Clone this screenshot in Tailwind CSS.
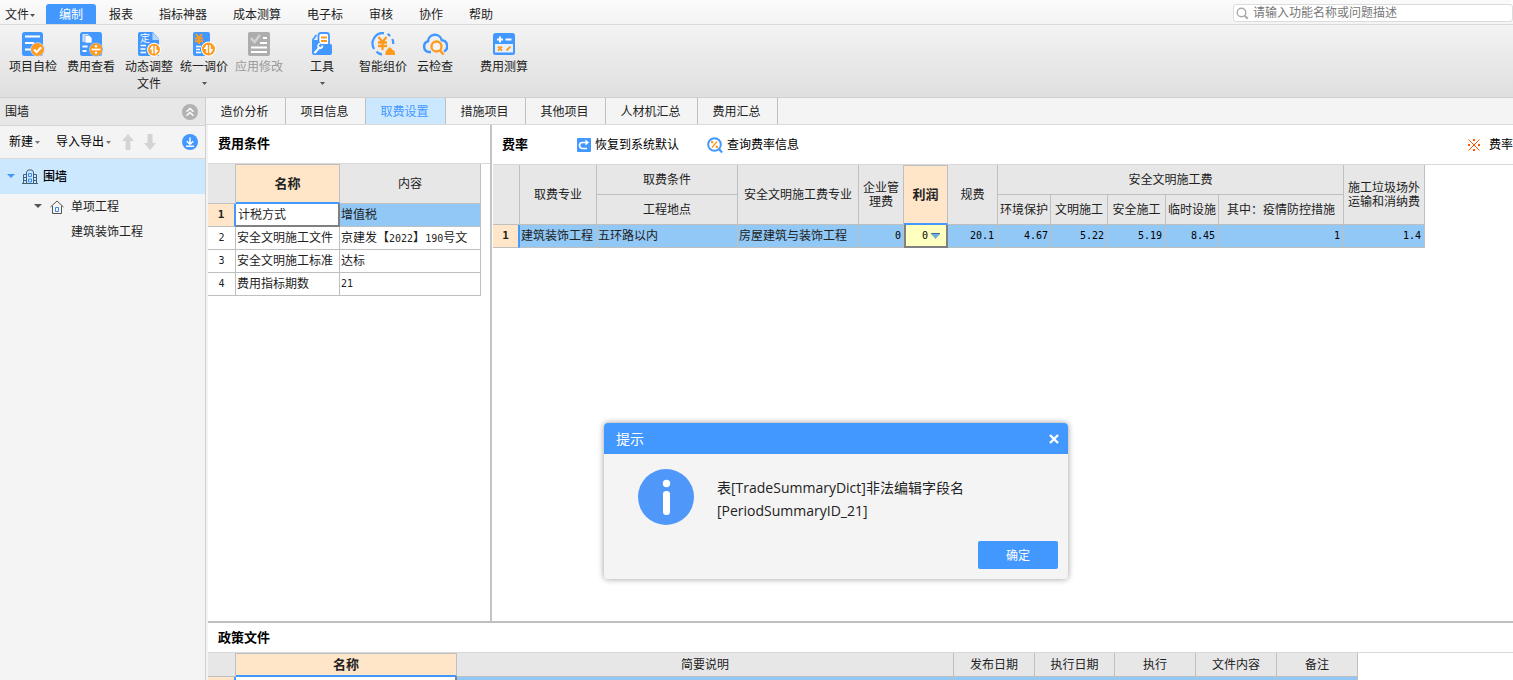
<!DOCTYPE html>
<html lang="zh-CN">
<head>
<meta charset="utf-8">
<title>取费设置</title>
<script src="https://cdn.jsdelivr.net/npm/@tailwindcss/browser@4"></script>
</head>
<body class="h-screen overflow-hidden flex flex-col bg-[#f4f4f4] font-['Liberation_Sans','Noto_Sans_CJK_SC',sans-serif] text-xs text-[#222] whitespace-nowrap">

<!-- menu bar -->
<header class="shrink-0 h-[25px] flex items-end border-b border-[#d9d9d9] bg-linear-to-b from-[#fbfbfb] to-[#f4f4f4]">
  <nav class="flex items-end leading-[18px]">
    <button class="w-[46px] pl-[5px] pt-0.5 flex items-center">文件<svg class="ml-px" width="5" height="3" viewBox="0 0 5 3"><path d="M0 0h5L2.500 3z" fill="#555"/></svg></button>
    <button class="px-[13px] pt-0.5 bg-[#4398ff] text-white rounded-t-[3px]">编制</button>
    <button class="px-[13px] pt-0.5">报表</button>
    <button class="px-[13px] pt-0.5">指标神器</button>
    <button class="px-[13px] pt-0.5">成本测算</button>
    <button class="px-[13px] pt-0.5">电子标</button>
    <button class="px-[13px] pt-0.5">审核</button>
    <button class="px-[13px] pt-0.5">协作</button>
    <button class="px-[13px] pt-0.5">帮助</button>
  </nav>
  <label class="ml-auto mb-0.5 w-[280px] h-[18px] flex items-center gap-1 pl-0.5 bg-white border border-[#dcdcdc] rounded-[3px]">
    <svg width="13" height="13" viewBox="0 0 13 13" fill="none" stroke="#aaa" stroke-width="1.4"><circle cx="5.500" cy="5.500" r="4.300"/><path d="M8.800 8.800l3 3" stroke-width="2"/></svg>
    <input class="flex-1 min-w-0 outline-none placeholder:text-[#777]" type="text" aria-label="搜索" placeholder="请输入功能名称或问题描述">
  </label>
</header>

<!-- ribbon -->
<div class="shrink-0 h-[73px] flex items-start pl-[9px] pt-1.5 border-b border-[#cfcfcf] bg-linear-to-b from-[#f3f3f3] to-[#dfdfdf] leading-[17px]">
  <button class="w-12 mr-2.5 flex flex-col items-center gap-0.5">
    <svg width="24" height="26" viewBox="0 0 24 26"><rect x="1" y="1" width="21" height="24" rx="2.5" fill="#4398ff"/><path d="M4 5.500h15M4 12h9M4 18.500h6" stroke="#fff" stroke-width="1.800"/><circle cx="16.500" cy="18.500" r="7.200" fill="#b9d9ff"/><circle cx="16.500" cy="18.500" r="6.500" fill="#ff9a1c"/><path d="M13 18.500l2.600 2.700 4.600-5" fill="none" stroke="#fff" stroke-width="2"/></svg>
    <span>项目自检</span></button>
  <button class="w-12 mr-2.5 flex flex-col items-center gap-0.5">
    <svg width="24" height="26" viewBox="0 0 24 26"><rect x="1" y="1" width="22" height="24" rx="2.500" fill="#4398ff"/><path d="M3.500 3h6v8h-6z" fill="#cfe5ff"/><path d="M6 4.500h4.500l2.500 2.500v5h-7z" fill="#fff" stroke="#4398ff" stroke-width=".6"/><path d="M3.500 15.500h5M3.500 20h4" stroke="#fff" stroke-width="1.800"/><circle cx="17" cy="18.500" r="7" fill="#8fc1ff"/><circle cx="17" cy="18.500" r="6.300" fill="#ff9a1c"/><path d="M12.500 18.500h9" stroke="#fff" stroke-width="1.700"/><circle cx="17" cy="15.200" r="1.200" fill="#fff"/><circle cx="17" cy="21.800" r="1.200" fill="#fff"/></svg>
    <span>费用查看</span></button>
  <button class="w-12 mr-[7px] flex flex-col items-center gap-0.5">
    <svg width="24" height="26" viewBox="0 0 24 26"><path d="M3 1h13l6 7v17H3a2 2 0 01-2-2V3a2 2 0 012-2z" fill="#4398ff"/><path d="M15.500 1l7 8h-7z" fill="#b5d6ff"/><text x="3" y="10.500" font-size="10" fill="#fff">定</text><path d="M3.500 14.500h5.500M3.500 18h5M3.500 21.500h5.500" stroke="#fff" stroke-width="1.300"/><circle cx="17" cy="18.800" r="7" fill="#fff"/><circle cx="17" cy="18.800" r="6" fill="#ff9a1c"/><path d="M15.500 15v7.500M18.500 22.500V15" stroke="#fff" stroke-width="1.600"/><path d="M15.500 14v4.500h-3zM18.500 23.500V19h3z" fill="#fff"/></svg>
    <span>动态调整<br>文件</span></button>
  <button class="w-12 mr-[7px] flex flex-col items-center gap-0.5">
    <svg width="24" height="26" viewBox="0 0 24 26"><rect x="1" y="1" width="17" height="24" rx="2" fill="#4398ff"/><path d="M4 3l3 4 3-4M3 7.500h8M3 10.300h8M7 7v6" fill="none" stroke="#ff9a1c" stroke-width="2"/><path d="M4 15.500h5M4 18.500h4M4 21.500h5" stroke="#fff" stroke-width="1.300"/><circle cx="16.500" cy="18" r="7.500" fill="#fff"/><circle cx="16.500" cy="18" r="6.500" fill="#ff9a1c"/><path d="M15 14v8M18 22v-8" stroke="#fff" stroke-width="1.600"/><path d="M15 13v5h-3.300zM18 23v-5h3.300z" fill="#fff"/></svg>
    <span>统一调价</span>
    <svg class="mt-1" width="5" height="3" viewBox="0 0 5 3"><path d="M0 0h5L2.500 3z" fill="#555"/></svg></button>
  <button class="w-12 mr-[27px] flex flex-col items-center gap-0.5 text-[#9a9a9a]" disabled>
    <svg width="24" height="26" viewBox="0 0 24 26"><rect x="1" y="1" width="22" height="24" rx="2" fill="#adadad"/><path d="M4 7l3.500 4L13 4" fill="none" stroke="#d2d2d2" stroke-width="2.400"/><path d="M16 7h4M13 12h7M4 16.500h16M4 21h16" stroke="#fff" stroke-width="1.800"/></svg>
    <span>应用修改</span></button>
  <button class="w-6 mr-[25px] flex flex-col items-center gap-0.5">
    <svg width="24" height="26" viewBox="0 0 24 26"><path d="M8.500 12V4a2.500 2.500 0 012.500-2h5.500A2.500 2.500 0 0119 4.500V13" fill="#fff" stroke="#4398ff" stroke-width="1.800"/><path d="M3 11V8.500L6.500 4" fill="none" stroke="#4398ff" stroke-width="1.800"/><path d="M11 6.500h6M11 10h6" stroke="#ff9a1c" stroke-width="1.900"/><path d="M2 9h5.500l1.500 1.500L11 13h9.500a1.500 1.500 0 011.500 1.500V22a2 2 0 01-2 2H4a2 2 0 01-2-2z" fill="#4398ff"/><path d="M5 21.500l4.500-5" stroke="#fff" stroke-width="2" stroke-linecap="round"/><path d="M10.500 12.500a2.500 2.500 0 00-1.500 4.500 2.500 2.500 0 003.500-2.500" fill="none" stroke="#fff" stroke-width="1.600"/></svg>
    <span>工具</span>
    <svg class="mt-1" width="5" height="3" viewBox="0 0 5 3"><path d="M0 0h5L2.500 3z" fill="#555"/></svg></button>
  <button class="w-12 mr-2.5 flex flex-col items-center gap-0.5">
    <svg width="26" height="26" viewBox="0 0 26 26"><path d="M4.200 18A10.300 10.300 0 0114 2.200M17.500 3.100a10.500 10.500 0 012.700 1.900M22.300 8a10 10 0 01.900 5M6.500 20.600c1.500 1.500 3.500 2.500 5.500 2.700" fill="none" stroke="#4398ff" stroke-width="2.200"/><path d="M8.500 6l4 5 4-5M8 11.500h9M8 15h9M12.500 11v8" fill="none" stroke="#ff9a1c" stroke-width="2.300"/><path d="M15.500 24v-2.500c0-2 2-2.500 2.500-4 .5-1.500 3-1.500 3.500 0 .5 1.500 3.500 2 3.500 4V24z" fill="#ff9a1c"/></svg>
    <span>智能组价</span></button>
  <button class="w-9 mr-[27px] flex flex-col items-center gap-0.5">
    <svg width="26" height="26" viewBox="0 0 26 26"><path d="M9 21H7A5.500 5.500 0 016 10.300 7 7 0 0119.800 9.200 6 6 0 0122 20.500" fill="none" stroke="#4398ff" stroke-width="2.500"/><circle cx="14.500" cy="15.500" r="5" fill="#f4f4f4" stroke="#ff9a1c" stroke-width="2.300"/><path d="M18 19.500l3.500 4" stroke="#ff9a1c" stroke-width="2.500"/></svg>
    <span>云检查</span></button>
  <button class="w-12 flex flex-col items-center gap-0.5">
    <svg width="24" height="26" viewBox="0 0 24 26"><rect x="1" y="2" width="22" height="22" rx="2.500" fill="#4398ff"/><path d="M3 13h18v8.500H3z" fill="#e6f1ff"/><path d="M8 5.500v6M5 8.500h6M13.500 8.500h6" stroke="#fff" stroke-width="1.900"/><path d="M6 15.500l4 4M10 15.500l-4 4M14.500 19.500l4-4" stroke="#ff9a1c" stroke-width="1.900"/></svg>
    <span>费用测算</span></button>
</div>

<div class="flex-1 min-h-0 flex">
  <!-- project tree -->
  <aside class="shrink-0 w-[206px] border-r border-[#cfcfcf] flex flex-col">
    <div class="h-7 flex items-center justify-between pl-[5px] pr-[7px] bg-[#e7e7e7] border-b border-[#d4d4d4]">
      <span>围墙</span>
      <button aria-label="折叠"><svg width="16" height="16" viewBox="0 0 16 16"><circle cx="8" cy="8" r="8" fill="#b2b2b2"/><path d="M4.500 7.700L8 4.500l3.500 3.200M4.500 11.700L8 8.500l3.500 3.200" fill="none" stroke="#fff" stroke-width="1.500"/></svg></button>
    </div>
    <div class="h-[33px] flex items-center pl-[9px] pr-[7px] border-b border-[#d9d9d9] text-black">
      <button class="flex items-center gap-0.5 mr-4">新建<svg width="5" height="3" viewBox="0 0 5 3"><path d="M0 0h5L2.500 3z" fill="#777"/></svg></button>
      <button class="flex items-center gap-0.5 mr-[11px]">导入导出<svg width="5" height="3" viewBox="0 0 5 3"><path d="M0 0h5L2.500 3z" fill="#777"/></svg></button>
      <button class="mr-2.5" aria-label="上移" disabled><svg width="12" height="16" viewBox="0 0 12 16"><path d="M6 0l6 7H8.500v9h-5V7H0z" fill="#d4d4d4"/></svg></button>
      <button aria-label="下移" disabled><svg width="12" height="16" viewBox="0 0 12 16"><path d="M6 16l6-7H8.500V0h-5v9H0z" fill="#d4d4d4"/></svg></button>
      <button class="ml-auto" aria-label="下载"><svg width="16" height="16" viewBox="0 0 16 16"><circle cx="8" cy="8" r="8" fill="#4398ff"/><path d="M8 3.500v6.500M4.800 7.200L8 10.200l3.200-3M4 12.300h8" fill="none" stroke="#fff" stroke-width="1.500"/></svg></button>
    </div>
    <ul>
      <li class="h-[35px] flex items-center pl-[7px] bg-[#cce8ff] font-medium text-black">
        <svg width="8" height="5" viewBox="0 0 8 5"><path d="M0 0h8L4 4z" fill="#4398ff"/></svg>
        <svg class="ml-[7px] mr-[5px]" width="16" height="16" viewBox="0 0 16 16" fill="none" stroke="#42607c"><path d="M0 14.500h16M1.500 14V5.500H4M4.500 14V3l1.500-2h4l1.500 2v11M12 5.500h2.500V14M2 8.500h2M2 11.500h2M12 8.500h2M12 11.500h2"/><path d="M6.500 4.500h3v3h-3zM6.500 10h3v3h-3z" stroke="#3b8bea"/></svg>
        围墙</li>
      <li class="h-[25px] flex items-center pl-[34px]">
        <svg width="8" height="5" viewBox="0 0 8 5"><path d="M0 0h8L4 4z" fill="#555"/></svg>
        <svg class="ml-2 mr-[7px]" width="14" height="14" viewBox="0 0 14 14" fill="none" stroke="#555"><path d="M.5 7L7 1l6.500 6M2.500 6v7.500h9V6"/><path d="M5.500 7.500h3v4h-3z" stroke="#3b8bea"/></svg>
        单项工程</li>
      <li class="h-[25px] flex items-center pl-[71px]">建筑装饰工程</li>
    </ul>
  </aside>

  <main class="flex-1 min-w-0 flex flex-col">
    <nav class="shrink-0 h-[27px] flex border-b border-[#d9d9d9]">
      <button class="w-20 pt-0.5 pr-0.5 border-r border-[#bfbfbf]">造价分析</button>
      <button class="w-20 pt-0.5 pr-0.5 border-r border-[#bfbfbf]">项目信息</button>
      <button class="w-20 pt-0.5 pr-0.5 border-r border-[#bfbfbf] bg-[#cce8ff] text-[#4398ff]">取费设置</button>
      <button class="w-20 pt-0.5 pr-0.5 border-r border-[#bfbfbf]">措施项目</button>
      <button class="w-20 pt-0.5 pr-0.5 border-r border-[#bfbfbf]">其他项目</button>
      <button class="w-[92px] pt-0.5 pr-0.5 border-r border-[#bfbfbf]">人材机汇总</button>
      <button class="w-20 pt-0.5 pr-0.5 border-r border-[#bfbfbf]">费用汇总</button>
    </nav>

    <div class="flex-1 min-h-0 ml-0.5 flex flex-col bg-white">
      <div class="flex-1 min-h-0 flex border-b-2 border-[#bfbfbf]">
        <!-- fee conditions -->
        <section class="shrink-0 w-[284px] border-r-2 border-[#c4c4c4]">
          <h2 class="h-[39px] flex items-center pl-2.5 border-b border-[#d9d9d9] text-[13px] font-bold text-black">费用条件</h2>
          <table class="table-fixed w-[273px] border-separate border-spacing-0">
            <colgroup><col class="w-7"><col class="w-[104px]"><col class="w-[141px]"></colgroup>
            <thead><tr class="h-10 bg-[#e7e7e7]">
              <td class="border-r border-b border-[#bfbfbf]"></td>
              <th class="border-r border-t border-[#bfbfbf] border-b-2 border-b-[#4398ff] bg-[#ffe6c8] text-[13px] font-bold">名称</th>
              <th class="border-r border-b border-[#bfbfbf] font-normal">内容</th>
            </tr></thead>
            <tbody>
              <tr class="h-[23px]">
                <td class="border-b border-[#bfbfbf] border-r-2 border-r-[#4398ff] bg-[#ffe6c8] text-center font-bold text-[11px] font-['DejaVu_Sans_Mono',monospace]">1</td>
                <td class="border-r-2 border-b-2 border-[#808080] pl-0.5">计税方式</td>
                <td class="border-r border-b border-[#bfbfbf] pl-px bg-[#91c8f6]">增值税</td>
              </tr>
              <tr class="h-[23px]">
                <td class="border-r border-b border-[#bfbfbf] text-center text-[10px] font-['DejaVu_Sans_Mono',monospace]">2</td>
                <td class="border-r border-b border-[#bfbfbf] pl-px">安全文明施工文件</td>
                <td class="border-r border-b border-[#bfbfbf] pl-px">京建发【<span class="text-[10px] font-['DejaVu_Sans_Mono',monospace]">2022</span>】<span class="text-[10px] font-['DejaVu_Sans_Mono',monospace]">190</span>号文</td>
              </tr>
              <tr class="h-[23px]">
                <td class="border-r border-b border-[#bfbfbf] text-center text-[10px] font-['DejaVu_Sans_Mono',monospace]">3</td>
                <td class="border-r border-b border-[#bfbfbf] pl-px">安全文明施工标准</td>
                <td class="border-r border-b border-[#bfbfbf] pl-px">达标</td>
              </tr>
              <tr class="h-[23px]">
                <td class="border-r border-b border-[#bfbfbf] text-center text-[10px] font-['DejaVu_Sans_Mono',monospace]">4</td>
                <td class="border-r border-b border-[#bfbfbf] pl-px">费用指标期数</td>
                <td class="border-r border-b border-[#bfbfbf] pl-px text-[10px] font-['DejaVu_Sans_Mono',monospace]">21</td>
              </tr>
            </tbody>
          </table>
        </section>

        <!-- fee rates -->
        <section class="flex-1 min-w-0 pl-px">
          <div class="h-10 flex items-center pl-[9px] border-b border-[#d9d9d9] text-black">
            <h2 class="w-[75px] text-[13px] font-bold">费率</h2>
            <button class="w-[130px] flex items-center gap-1">
              <svg width="14" height="14" viewBox="0 0 14 14"><rect width="14" height="14" rx="1" fill="#4398ff"/><path d="M10 10.500H5.500a2.800 2.800 0 010-6H10" fill="none" stroke="#fff" stroke-width="1.700"/><path d="M8.500 1.500l3.500 3-3.500 3z" fill="#fff"/></svg>恢复到系统默认</button>
            <button class="flex items-center gap-1">
              <svg width="16" height="16" viewBox="0 0 16 16"><circle cx="7.500" cy="7.500" r="6.300" fill="#fff" stroke="#4398ff" stroke-width="2"/><path d="M12 12l3 3.500" stroke="#4398ff" stroke-width="2.200"/><path d="M5 10.500l5-6" stroke="#ff9a1c" stroke-width="1.400"/><path d="M4 4h2.200v2.200H4zM8.800 8.800H11V11H8.800z" fill="#ff9a1c"/></svg>查询费率信息</button>
            <svg class="ml-auto mr-[9px]" width="12" height="12" viewBox="0 0 12 12"><path d="M.5.500l11 11M11.500.500l-11 11" stroke="#ff5a00"/><path d="M5 0h2v2H5zM5 10h2v2H5zM0 5h2v2H0zM10 5h2v2h-2z" fill="#ff5a00"/></svg>
            <span>费率</span>
          </div>
          <table class="table-fixed w-[932px] border-separate border-spacing-0 leading-[14px]">
            <colgroup><col class="w-[27px]"><col class="w-[77px]"><col class="w-[141px]"><col class="w-[121px]"><col class="w-[45px]"><col class="w-[44px]"><col class="w-[50px]"><col class="w-[53px]"><col class="w-[57px]"><col class="w-[58px]"><col class="w-[53px]"><col class="w-[125px]"><col class="w-[81px]"></colgroup>
            <thead class="bg-[#e7e7e7]">
              <tr class="h-[30px]">
                <td rowspan="2" class="border-r border-b border-[#bfbfbf]"></td>
                <th rowspan="2" class="border-r border-b border-[#bfbfbf] font-normal">取费专业</th>
                <th class="border-r border-b border-[#bfbfbf] font-normal">取费条件</th>
                <th rowspan="2" class="border-r border-b border-[#bfbfbf] font-normal">安全文明施工费专业</th>
                <th rowspan="2" class="border-r border-b border-[#bfbfbf] font-normal">企业管<br>理费</th>
                <th rowspan="2" class="border-r border-t border-[#bfbfbf] border-b-2 border-b-[#4398ff] bg-[#ffe6c8] text-[13px] font-bold">利润</th>
                <th rowspan="2" class="border-r border-b border-[#bfbfbf] font-normal">规费</th>
                <th colspan="5" class="border-r border-b border-[#bfbfbf] font-normal">安全文明施工费</th>
                <th rowspan="2" class="border-r border-b border-[#bfbfbf] font-normal">施工垃圾场外<br>运输和消纳费</th>
              </tr>
              <tr class="h-[30px]">
                <th class="border-r border-b border-[#bfbfbf] font-normal">工程地点</th>
                <th class="border-r border-b border-[#bfbfbf] font-normal">环境保护</th>
                <th class="border-r border-b border-[#bfbfbf] font-normal">文明施工</th>
                <th class="border-r border-b border-[#bfbfbf] font-normal">安全施工</th>
                <th class="border-r border-b border-[#bfbfbf] font-normal">临时设施</th>
                <th class="border-r border-b border-[#bfbfbf] font-normal">其中：疫情防控措施</th>
              </tr>
            </thead>
            <tbody>
              <tr class="h-[23px] bg-[#91c8f6]">
                <td class="border-b border-[#bfbfbf] border-r-2 border-r-[#4398ff] bg-[#ffe6c8] text-center font-bold text-[11px] font-['DejaVu_Sans_Mono',monospace]">1</td>
                <td class="border-r border-b border-[#bfbfbf] pl-px">建筑装饰工程</td>
                <td class="border-r border-b border-[#bfbfbf] pl-px">五环路以内</td>
                <td class="border-r border-b border-[#bfbfbf] pl-px">房屋建筑与装饰工程</td>
                <td class="border-r border-b border-[#bfbfbf] pr-0.5 text-right text-[10px] text-black font-['DejaVu_Sans_Mono',monospace]">0</td>
                <td class="border-l-2 border-r-2 border-b-2 border-[#808080] bg-[#ffffc0] text-[10px] text-black font-['DejaVu_Sans_Mono',monospace]">
                  <div class="flex items-center justify-end gap-[3px] pr-1.5"><input class="w-4 text-right outline-none" aria-label="利润" value="0"><button aria-label="选择利润"><svg width="9" height="6" viewBox="0 0 9 6"><path d="M0 1h9L4.500 6z" fill="#6fb0dc"/><path d="M0 .5h9" stroke="#3d6f9e"/></svg></button></div></td>
                <td class="border-r border-b border-[#bfbfbf] pr-[3px] text-right text-[10px] text-black font-['DejaVu_Sans_Mono',monospace]">20.1</td>
                <td class="border-r border-b border-[#bfbfbf] pr-0.5 text-right text-[10px] text-black font-['DejaVu_Sans_Mono',monospace]">4.67</td>
                <td class="border-r border-b border-[#bfbfbf] pr-[3px] text-right text-[10px] text-black font-['DejaVu_Sans_Mono',monospace]">5.22</td>
                <td class="border-r border-b border-[#bfbfbf] pr-[3px] text-right text-[10px] text-black font-['DejaVu_Sans_Mono',monospace]">5.19</td>
                <td class="border-r border-b border-[#bfbfbf] pr-[3px] text-right text-[10px] text-black font-['DejaVu_Sans_Mono',monospace]">8.45</td>
                <td class="border-r border-b border-[#bfbfbf] pr-[3px] text-right text-[10px] text-black font-['DejaVu_Sans_Mono',monospace]">1</td>
                <td class="border-r border-b border-[#bfbfbf] pr-[3px] text-right text-[10px] text-black font-['DejaVu_Sans_Mono',monospace]">1.4</td>
              </tr>
            </tbody>
          </table>
        </section>
      </div>

      <!-- policy documents -->
      <section class="shrink-0 h-[57px] overflow-hidden">
        <h2 class="h-[30px] flex items-center pl-2.5 border-b border-[#d9d9d9] text-[13px] font-bold text-black">政策文件</h2>
        <table class="table-fixed w-[1150px] border-separate border-spacing-0">
          <colgroup><col class="w-7"><col class="w-[221px]"><col class="w-[497px]"><col class="w-[81px]"><col class="w-20"><col class="w-[81px]"><col class="w-[81px]"><col class="w-[81px]"></colgroup>
          <thead><tr class="h-6 bg-[#e7e7e7]">
            <td class="border-r border-b border-[#bfbfbf]"></td>
            <th class="border-r border-t border-[#bfbfbf] border-b-2 border-b-[#4398ff] bg-[#ffe6c8] text-[13px] font-bold">名称</th>
            <th class="border-r border-b border-[#bfbfbf] font-normal">简要说明</th>
            <th class="border-r border-b border-[#bfbfbf] font-normal">发布日期</th>
            <th class="border-r border-b border-[#bfbfbf] font-normal">执行日期</th>
            <th class="border-r border-b border-[#bfbfbf] font-normal">执行</th>
            <th class="border-r border-b border-[#bfbfbf] font-normal">文件内容</th>
            <th class="border-r border-b border-[#bfbfbf] font-normal">备注</th>
          </tr></thead>
          <tbody><tr class="h-[23px] bg-[#91c8f6]">
            <td class="border-r-2 border-[#4398ff] bg-[#ffe6c8]"></td>
            <td class="border-r-2 border-[#808080] bg-white"></td>
            <td class="border-r border-[#bfbfbf]"></td>
            <td class="border-r border-[#bfbfbf]"></td>
            <td class="border-r border-[#bfbfbf]"></td>
            <td class="border-r border-[#bfbfbf]"></td>
            <td class="border-r border-[#bfbfbf]"></td>
            <td class="border-r border-[#bfbfbf]"></td>
          </tr></tbody>
        </table>
      </section>
    </div>
  </main>
</div>

<!-- message box -->
<div role="dialog" aria-labelledby="dlg-title" class="absolute left-[604px] top-[423px] w-[464px] rounded-[4px] bg-[#f4f4f4] shadow-[0_0_6px_rgba(0,0,0,0.4)] overflow-hidden">
  <div class="h-[31px] flex items-center justify-between pl-3 pr-[9px] bg-[#4398ff] text-white">
    <h2 id="dlg-title" class="text-sm">提示</h2>
    <button aria-label="关闭"><svg width="10" height="10" viewBox="0 0 10 10"><path d="M1 1l8 8M9 1L1 9" stroke="#fff" stroke-width="2.400"/></svg></button>
  </div>
  <div class="flex pl-[34px] pt-[15px]">
    <svg width="56" height="56" viewBox="0 0 56 56"><circle cx="28" cy="28" r="28" fill="#4f98f9"/><circle cx="28.500" cy="14.500" r="3.700" fill="#fff"/><rect x="25" y="22" width="7" height="24" rx="3.300" fill="#fff"/></svg>
    <p class="ml-[23px] pt-[7px] text-sm leading-[23px] font-['Open_Sans','Noto_Sans_CJK_SC',sans-serif]">表[TradeSummaryDict]非法编辑字段名<br>[PeriodSummaryID_21]</p>
  </div>
  <div class="flex justify-end pt-4 pr-2.5 pb-2.5">
    <button class="w-20 h-7 pt-0.5 rounded-xs bg-[#4398ff] text-white">确定</button>
  </div>
</div>
</body>
</html>
